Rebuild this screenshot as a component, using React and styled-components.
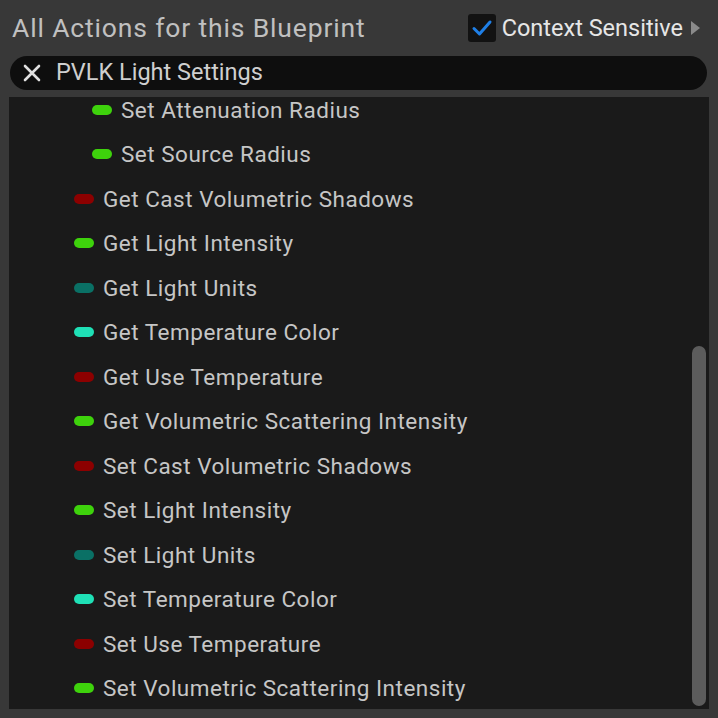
import React from 'react';
import styled, { createGlobalStyle } from 'styled-components';

const GlobalStyle = createGlobalStyle`
  html, body {
    margin: 0;
    padding: 0;
    background: #383838;
  }
  body {
    font-family: Roboto, "Noto Sans", sans-serif;
  }
`;

const Panel = styled.div`
  width: 718px;
  height: 718px;
  box-sizing: border-box;
  background: #383838;
  padding: 0 9px 9px 9px;
  display: flex;
  flex-direction: column;
`;

const Header = styled.div`
  height: 56px;
  display: flex;
  align-items: center;
  padding: 0 0 1px 3px;
  box-sizing: border-box;
`;

const Title = styled.div`
  flex: 1;
  font-size: 26.5px;
  color: #c0c0c0;
  letter-spacing: 0.85px;
`;

const Toggle = styled.div`
  display: flex;
  align-items: center;
  gap: 6px;
`;

const CheckBox = styled.div`
  width: 28px;
  height: 28px;
  border-radius: 3px;
  background: #121212;
  display: flex;
  align-items: center;
  justify-content: center;
`;

const ToggleLabel = styled.span`
  font-size: 23.5px;
  color: #e6e6e6;
`;

const Arrow = styled.div`
  width: 0;
  height: 0;
  margin: 0 9px 0 2px;
  border-top: 7px solid transparent;
  border-bottom: 7px solid transparent;
  border-left: 9px solid #8a8a8a;
`;

const Search = styled.div`
  height: 34px;
  margin: 0 2px 7px 1px;
  border-radius: 17px;
  background: #0e0e0e;
  display: flex;
  align-items: center;
  padding-left: 12px;
  gap: 14px;
`;

const SearchText = styled.span`
  font-size: 23.5px;
  color: #cfcfcf;
  margin-top: -3px;
`;

const List = styled.div`
  flex: 1;
  background: #1a1a1a;
  position: relative;
  overflow: hidden;
`;

const Row = styled.div`
  height: 44.5px;
  display: flex;
  align-items: center;
  padding-left: ${p => (p.$nested ? 83 : 65)}px;
  gap: 9px;
  margin-top: ${p => (p.$first ? -9.5 : 0)}px;
`;

const Pill = styled.span`
  width: 20px;
  height: 10px;
  border-radius: 5px;
  background: ${p => p.$color};
  flex-shrink: 0;
`;

const Label = styled.span`
  font-size: 22.5px;
  color: #c6c6c6;
  letter-spacing: 0.5px;
`;

const ScrollThumb = styled.div`
  position: absolute;
  right: 3px;
  top: 249px;
  width: 14px;
  bottom: 3px;
  border-radius: 7px;
  background: #5c5c5c;
`;

const GREEN = '#3ed20c';
const RED = '#8c0000';
const TEAL = '#0a7065';
const CYAN = '#1fe0b6';

const rows = [
  { t: 'Set Attenuation Radius', c: GREEN, n: true },
  { t: 'Set Source Radius', c: GREEN, n: true },
  { t: 'Get Cast Volumetric Shadows', c: RED },
  { t: 'Get Light Intensity', c: GREEN },
  { t: 'Get Light Units', c: TEAL },
  { t: 'Get Temperature Color', c: CYAN },
  { t: 'Get Use Temperature', c: RED },
  { t: 'Get Volumetric Scattering Intensity', c: GREEN },
  { t: 'Set Cast Volumetric Shadows', c: RED },
  { t: 'Set Light Intensity', c: GREEN },
  { t: 'Set Light Units', c: TEAL },
  { t: 'Set Temperature Color', c: CYAN },
  { t: 'Set Use Temperature', c: RED },
  { t: 'Set Volumetric Scattering Intensity', c: GREEN },
];

export default function App() {
  return (
    <>
      <GlobalStyle />
      <Panel>
        <Header>
          <Title>All Actions for this Blueprint</Title>
          <Toggle>
            <CheckBox>
              <svg width="22" height="22" viewBox="0 0 22 22">
                <path d="M3 11.5 L8.5 17 L19 5" fill="none" stroke="#1f7fe6" strokeWidth="3" strokeLinecap="round" strokeLinejoin="round" />
              </svg>
            </CheckBox>
            <ToggleLabel>Context Sensitive</ToggleLabel>
            <Arrow />
          </Toggle>
        </Header>
        <Search>
          <svg width="20" height="20" viewBox="0 0 20 20">
            <path d="M3 3 L17 17 M17 3 L3 17" stroke="#e0e0e0" strokeWidth="2.6" strokeLinecap="round" />
          </svg>
          <SearchText>PVLK Light Settings</SearchText>
        </Search>
        <List>
          {rows.map((r, i) => (
            <Row key={i} $nested={r.n} $first={i === 0}>
              <Pill $color={r.c} />
              <Label>{r.t}</Label>
            </Row>
          ))}
          <ScrollThumb />
        </List>
      </Panel>
    </>
  );
}
